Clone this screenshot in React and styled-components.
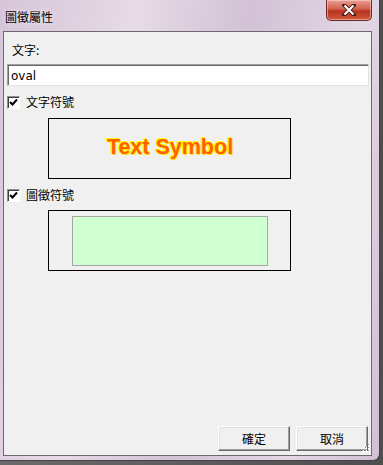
import styled, { createGlobalStyle } from "styled-components";

const GlobalStyle = createGlobalStyle`
  html, body {
    margin: 0;
    padding: 0;
    overflow: hidden;
  }
  body {
    background: #5c5c5c;
    font-family: "Noto Sans CJK TC", "Liberation Sans", sans-serif;
  }
`;

const Desktop = styled.div`
  width: 383px;
  height: 465px;
  background: linear-gradient(90deg, #6a6a6a, #4e4e4e);
`;

const Frame = styled.div`
  width: 380px;
  height: 461px;
  box-sizing: border-box;
  padding: 0 7px 4px 3px;
  display: flex;
  flex-direction: column;
  border-bottom-right-radius: 7px;
  border-right: 1px solid #4a3f4c;
  border-bottom: 1px solid #4a3f4c;
  background: linear-gradient(
    100deg,
    #d6c4d8 0%,
    #e6dbe6 30%,
    #d3c1d6 55%,
    #e3d7e4 80%,
    #d2bfd4 100%
  );
`;

const TitleBar = styled.div`
  height: 31px;
  display: flex;
  align-items: flex-start;
  justify-content: space-between;
`;

const Title = styled.span`
  margin: 9px 0 0 2px;
  font-size: 12px;
  line-height: 16px;
  color: #000;
  text-shadow: 0 0 6px rgba(255, 255, 255, 0.9);
`;

const CloseButton = styled.div`
  width: 46px;
  height: 21px;
  box-sizing: border-box;
  border: 1px solid #6b2a26;
  border-top: none;
  border-radius: 0 0 5px 5px;
  background: linear-gradient(#e9a195 0%, #d2604e 45%, #b8321f 55%, #cf5a3e 100%);
  display: flex;
  align-items: center;
  justify-content: center;
  box-shadow: inset 0 0 0 1px rgba(255, 220, 210, 0.5);
`;

const Client = styled.div`
  flex: 1;
  box-sizing: border-box;
  background: #f0f0f0;
  border: 1px solid #6f6670;
  padding: 10px 3px 0 3px;
  display: flex;
  flex-direction: column;
  position: relative;
`;

const Label = styled.div`
  font-size: 12px;
  line-height: 16px;
  margin-left: 5px;
  color: #000;
`;

const TextInput = styled.input`
  margin-top: 6px;
  height: 22px;
  box-sizing: border-box;
  width: 362px;
  border: 1px solid;
  border-color: #a0a0a0 #e3e3e3 #e3e3e3 #a0a0a0;
  box-shadow: inset 1px 1px 0 #696969;
  padding: 2px 2px 0 3px;
  font-family: "DejaVu Sans", "Noto Sans", sans-serif;
  font-size: 12px;
  color: #000;
  background: #fff;
  outline: none;
`;

const CheckRow = styled.label`
  display: flex;
  align-items: center;
  gap: 6px;
  margin-top: ${(p) => p.$top}px;
  font-size: 12px;
  line-height: 16px;
  color: #000;
`;

const CheckBox = styled.span`
  width: 13px;
  height: 13px;
  box-sizing: border-box;
  background: #fff;
  border: 1px solid;
  border-color: #8e8f8f #fff #fff #8e8f8f;
  box-shadow: inset 1px 1px 0 #3e3e3e;
  display: flex;
  align-items: center;
  justify-content: center;
`;

const PreviewBox = styled.div`
  margin: ${(p) => p.$top}px 0 0 41px;
  width: 243px;
  height: 61px;
  box-sizing: border-box;
  border: 1px solid #000;
  display: flex;
  align-items: center;
  justify-content: center;
`;

const SymbolText = styled.span`
  font-family: "Liberation Sans", Arial, sans-serif;
  font-weight: bold;
  font-size: 21.5px;
  color: #ff6000;
  margin: 0 0 2px 1px;
  text-shadow: -1px 0 0 #ffff00, 0 -1px 0 #ffff00, -1px -1px 0 #ffff00,
    1px 1px 0 #ffdd00;
`;

const Swatch = styled.div`
  width: 196px;
  height: 50px;
  box-sizing: border-box;
  background: #d0ffd0;
  border: 1px solid #a5a5a5;
  margin-left: 1px;
  margin-top: 1px;
`;

const Spacer = styled.div`
  flex: 1;
`;

const ButtonRow = styled.div`
  display: flex;
  justify-content: flex-end;
  gap: 6px;
  padding-right: 0;
  margin-bottom: 4px;
`;

const Button = styled.button`
  width: 72px;
  height: 25px;
  box-sizing: border-box;
  background: #f0f0f0;
  border: 1px solid;
  border-color: #fff #696969 #696969 #fff;
  box-shadow: inset -1px -1px 0 #a0a0a0, inset 1px 1px 0 #e3e3e3;
  font-family: "Noto Sans CJK TC", sans-serif;
  font-size: 12px;
  color: #000;
  padding: 0;
`;

const Grip = styled.svg`
  position: absolute;
  right: 1px;
  bottom: 1px;
`;

const Check = () => (
  <svg width="9" height="9" viewBox="0 0 9 9">
    <path d="M1 4 L3.5 6.5 L8 1.5" fill="none" stroke="#000" strokeWidth="2" />
  </svg>
);

export default function App() {
  return (
    <>
      <GlobalStyle />
      <Desktop>
        <Frame>
          <TitleBar>
            <Title>圖徵屬性</Title>
            <CloseButton>
              <svg width="14" height="12" viewBox="0 0 14 12">
                <path
                  d="M2 1 L12 11 M12 1 L2 11"
                  stroke="#4a1a14"
                  strokeWidth="4"
                  strokeLinecap="square"
                />
                <path
                  d="M2.5 1.5 L11.5 10.5 M11.5 1.5 L2.5 10.5"
                  stroke="#fff"
                  strokeWidth="2.2"
                />
              </svg>
            </CloseButton>
          </TitleBar>
          <Client>
            <Label>文字:</Label>
            <TextInput defaultValue="oval" />
            <CheckRow $top={8}>
              <CheckBox>
                <Check />
              </CheckBox>
              文字符號
            </CheckRow>
            <PreviewBox $top={8}>
              <SymbolText>Text Symbol</SymbolText>
            </PreviewBox>
            <CheckRow $top={8}>
              <CheckBox>
                <Check />
              </CheckBox>
              圖徵符號
            </CheckRow>
            <PreviewBox $top={7}>
              <Swatch />
            </PreviewBox>
            <Spacer />
            <ButtonRow>
              <Button>確定</Button>
              <Button>取消</Button>
            </ButtonRow>
            <Grip width="11" height="11" viewBox="0 0 11 11">
              {[
                [9, 1],
                [9, 4],
                [6, 4],
                [9, 7],
                [6, 7],
                [3, 7],
              ].map(([x, y]) => (
                <g key={`${x}-${y}`}>
                  <rect x={x} y={y} width="2" height="2" fill="#fff" />
                  <rect x={x} y={y} width="1" height="1" fill="#8c8c8c" />
                </g>
              ))}
            </Grip>
          </Client>
        </Frame>
      </Desktop>
    </>
  );
}
